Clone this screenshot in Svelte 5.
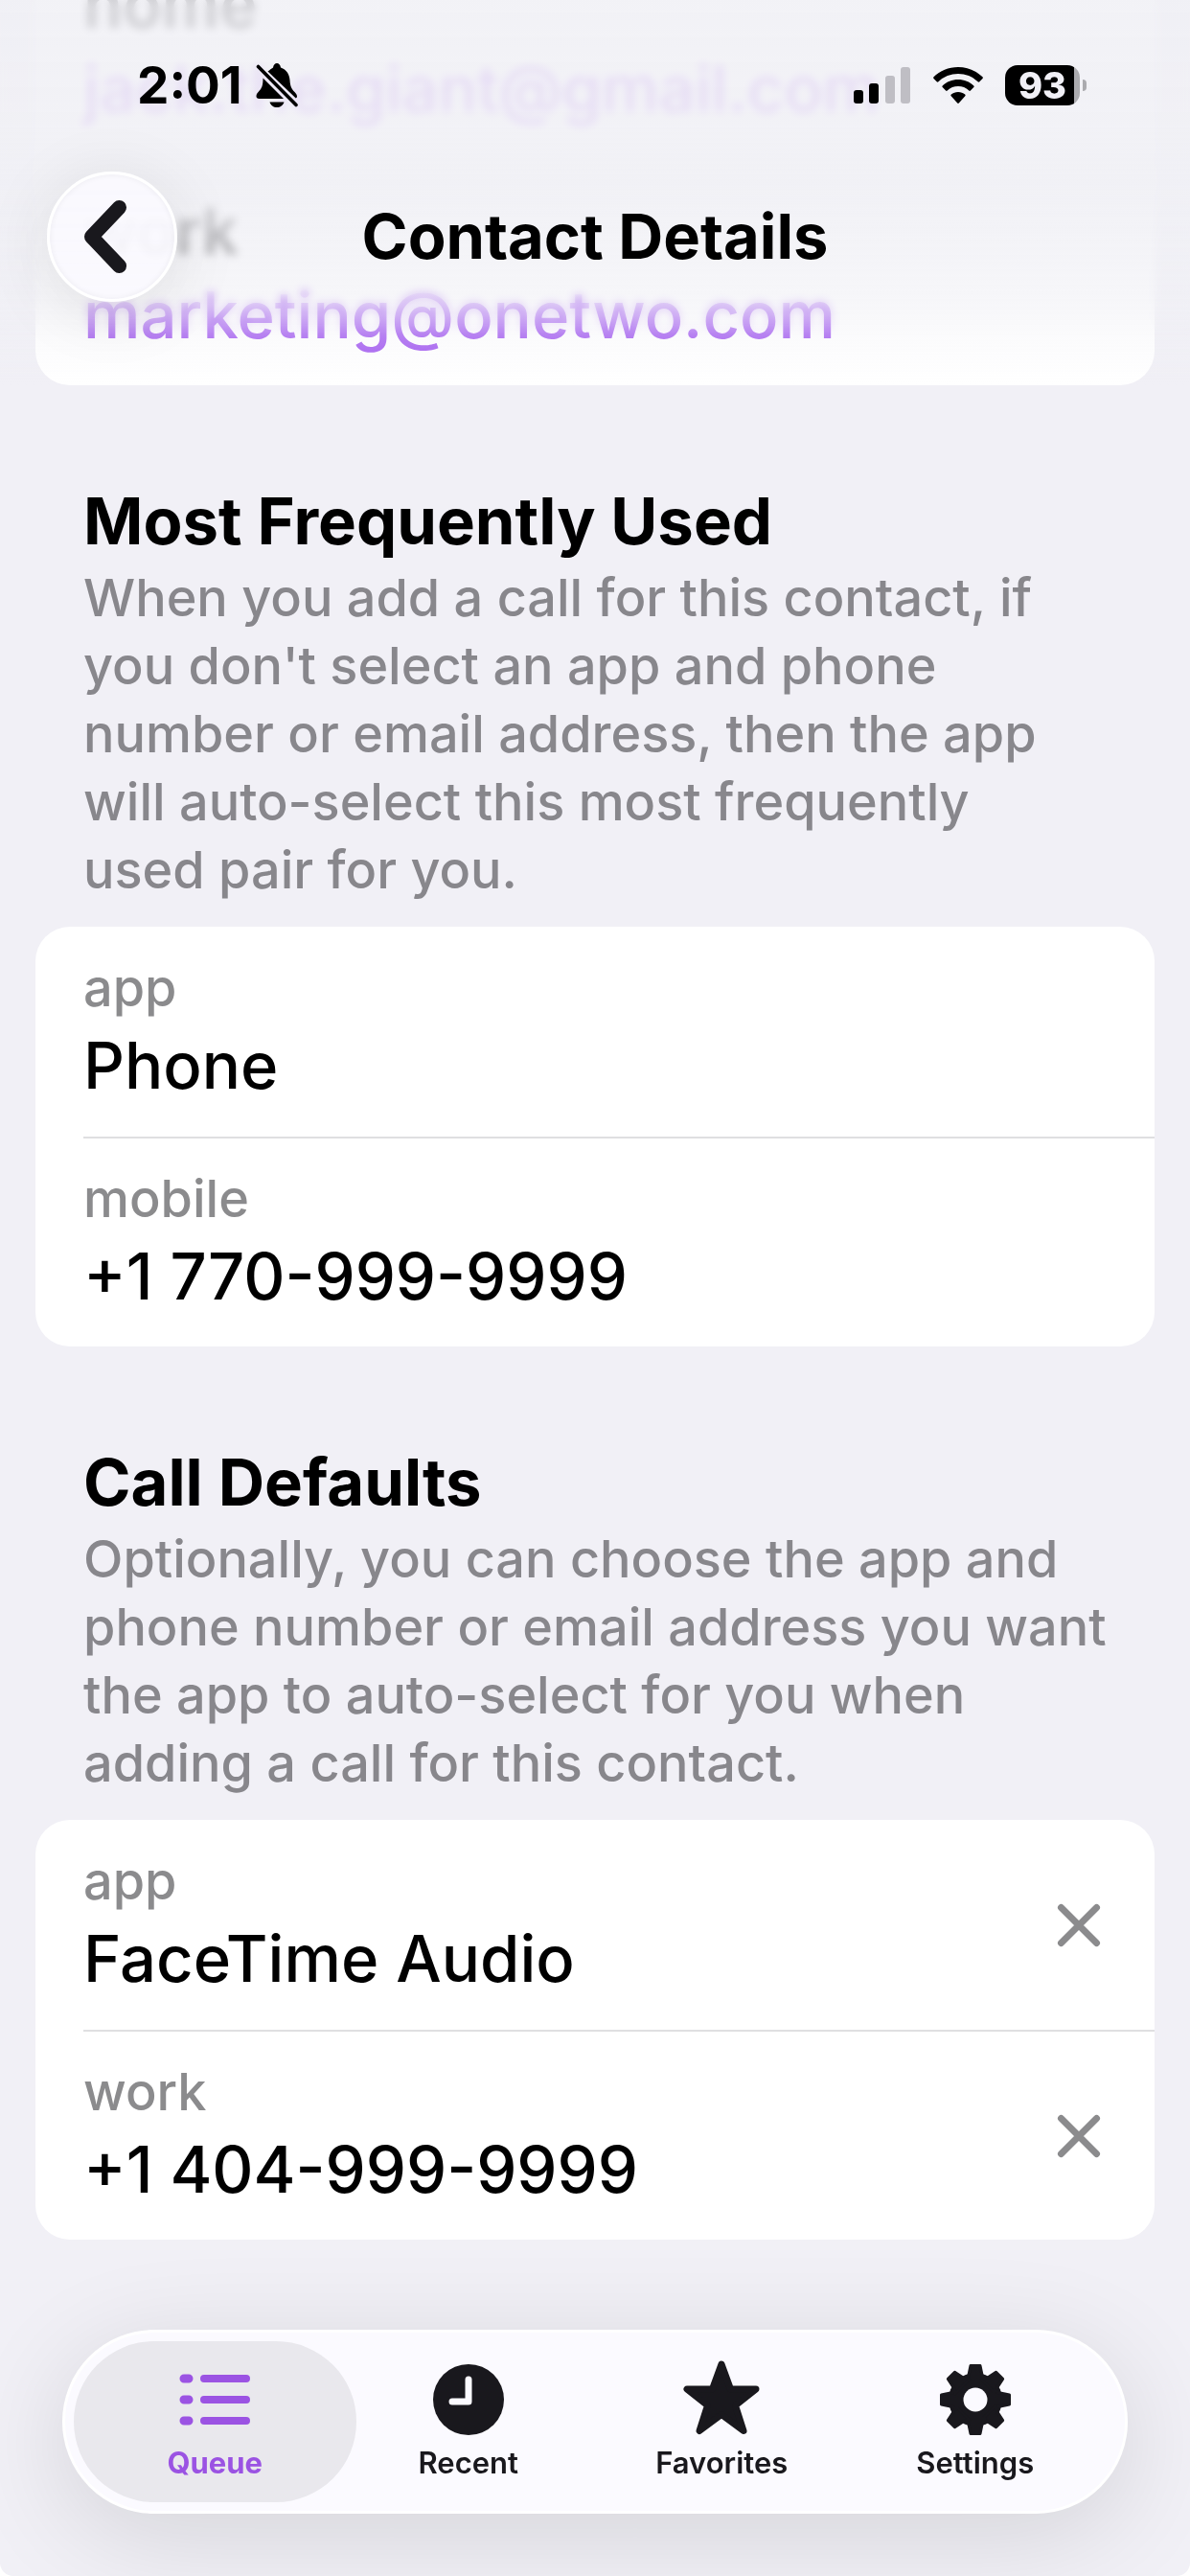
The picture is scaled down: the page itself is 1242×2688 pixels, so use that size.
<script lang="ts">
	type Field = { label: string; value: string; clearable?: boolean };

	const emails: Field[] = [
		{ label: 'home', value: 'jack.the.giant@gmail.com' },
		{ label: 'work', value: 'marketing@onetwo.com' }
	];

	const sections: { title: string; description: string; fields: Field[] }[] = [
		{
			title: 'Most Frequently Used',
			description:
				"When you add a call for this contact, if you don't select an app and phone number or email address, then the app will auto-select this most frequently used\u00a0pair for you.",
			fields: [
				{ label: 'app', value: 'Phone' },
				{ label: 'mobile', value: '+1 770-999-9999' }
			]
		},
		{
			title: 'Call Defaults',
			description:
				'Optionally, you can choose the app and phone number or email address you want the app to auto-select for you when adding a call for this contact.',
			fields: [
				{ label: 'app', value: 'FaceTime Audio', clearable: true },
				{ label: 'work', value: '+1 404-999-9999', clearable: true }
			]
		}
	];

	const tabs = ['Queue', 'Recent', 'Favorites', 'Settings'];
	let activeTab = $state('Queue');

	const teeth = [0, 45, 90, 135, 180, 225, 270, 315];
</script>

<div class="screen">
	<main>
		<div class="card emails">
			{#each emails as email}
				<div class="row">
					<div class="field">
						<span class="label">{email.label}</span>
						<a class="value" href="mailto:{email.value}">{email.value}</a>
					</div>
				</div>
			{/each}
		</div>

		{#each sections as section}
			<section>
				<div class="intro">
					<h2>{section.title}</h2>
					<p>{section.description}</p>
				</div>
				<div class="card">
					{#each section.fields as field}
						<div class="row">
							<div class="field">
								<span class="label">{field.label}</span>
								<span class="value">{field.value}</span>
							</div>
							{#if field.clearable}
								<button class="clear" type="button" aria-label="Clear {field.label}">
									<svg viewBox="0 0 46 46"><path d="M4.500 4.500 41.500 41.500M41.500 4.500 4.500 41.500" /></svg>
								</button>
							{/if}
						</div>
					{/each}
				</div>
			</section>
		{/each}
	</main>

	<header>
		<div class="status">
			<div class="clock">
				<span>2:01</span>
				<svg class="bell" viewBox="0 0 44 46">
					<path
						d="M14 7.500C16 5.500 17.500 5 18 4.500 18.500 1.500 20 0 22 0s3.500 1.500 4 4.500c6 2 9 7 9.500 13 .4 7 2 9.500 5 12.500 1.500 1.500 2.500 3 2.500 4.500 0 1-.5 1.500-1.200 2L12.500 8.500z"
					/>
					<path
						d="M7.500 15.500 29 37H3.500C1.500 37 .5 36 .5 34.500c0-2 1-3.500 2.500-5 3-3 4.500-6 4.500-14zM14.500 40.500h15c-1 3.500-4 5.500-7.500 5.500s-6.500-2-7.500-5.500z"
					/>
					<path class="slash" d="M2.500 3.500 42 43.500" />
				</svg>
			</div>
			<div class="indicators">
				<svg class="signal" viewBox="0 0 60 38">
					<rect x="0" y="24" width="10" height="14" rx="3" />
					<rect x="16" y="17" width="10" height="21" rx="3" />
					<rect class="dim" x="33" y="9" width="10" height="29" rx="3" />
					<rect class="dim" x="49" y="0" width="10" height="38" rx="3" />
				</svg>
				<svg class="wifi" viewBox="0 0 52 38">
					<path
						d="M26 0C36 0 45 4 51.500 10.200c.5.500.5 1.300 0 1.800L48.300 15.300c-.5.500-1.200.5-1.700 0A29.500 29.500 0 0 0 5.400 15.300c-.5.500-1.200.5-1.700 0L.5 12c-.5-.5-.5-1.300 0-1.800C7 4 16 0 26 0z"
					/>
					<path
						d="M26 13c6.300 0 12 2.400 16.300 6.400.5.500.5 1.200 0 1.700l-3.400 3.400c-.5.500-1.100.5-1.600 0a16.700 16.700 0 0 0-22.600 0c-.5.500-1.100.5-1.600 0l-3.400-3.400c-.5-.5-.5-1.200 0-1.700C14 15.400 19.700 13 26 13z"
					/>
					<path
						d="M26 26c2.800 0 5.300 1 7.200 2.600.6.500.6 1.200.1 1.700l-6.500 7.200c-.5.500-1.100.5-1.600 0l-6.500-7.200c-.5-.5-.5-1.200.1-1.700C20.700 27 23.200 26 26 26z"
					/>
				</svg>
				<div class="battery">
					<span>93</span>
				</div>
			</div>
		</div>
		<div class="nav">
			<button class="back" type="button" aria-label="Back">
				<svg viewBox="0 0 48 78"><path d="M38.500 8.500 9.500 39 38.500 69.500" /></svg>
			</button>
			<h1>Contact Details</h1>
		</div>
	</header>

	<nav class="tabbar">
		{#each tabs as tab}
			<button
				class="tab"
				class:active={tab === activeTab}
				type="button"
				onclick={() => (activeTab = tab)}
			>
				<svg viewBox="0 0 96 96">
					{#if tab === 'Queue'}
						<path class="bullets" d="M16 26h5M16 48h5M16 70h5" />
						<path class="lines" d="M37 26h44M37 48h44M37 70h44" />
					{:else if tab === 'Recent'}
						<circle cx="48" cy="48" r="37" />
						<path class="hands" d="M48 27v23H31" />
					{:else if tab === 'Favorites'}
						<path
							class="star"
							d="M48 11 57.500 37H84L62.500 54 71 80.500 48 63.500 25 80.500 33.500 54 12 37H38.500z"
						/>
					{:else}
						<mask id="gear-hole">
							<rect width="96" height="96" fill="#fff" />
							<circle cx="48" cy="48" r="12.500" fill="#000" />
						</mask>
						<g mask="url(#gear-hole)">
							<circle cx="48" cy="48" r="28" />
							{#each teeth as angle}
								<path
									class="tooth"
									transform="rotate({angle} 48 48)"
									d="M43 12.500h10l2.500 12 3 4h-21l3-4z"
								/>
							{/each}
						</g>
					{/if}
				</svg>
				<span>{tab}</span>
			</button>
		{/each}
	</nav>
</div>

<style>
	:global(body) {
		margin: 0;
		background: #fff;
	}
	.screen {
		--bg: #f1f0f6;
		--accent: #9b53e3;
		--ink: #19181d;
		--muted: #88878c;
		position: relative;
		min-height: 100vh;
		box-sizing: border-box;
		overflow: hidden;
		border-radius: 0 0 14px 14px;
		background: var(--bg);
		color: #000;
		font-family: Inter, 'Liberation Sans', sans-serif;
	}
	button {
		border: 0;
		padding: 0;
		background: none;
		color: inherit;
		font: inherit;
		cursor: pointer;
	}
	svg {
		display: block;
		fill: currentColor;
	}
	h1,
	h2,
	p {
		margin: 0;
	}

	main {
		margin-top: -52px;
		padding: 0 37px 350px;
	}
	.card {
		border-radius: 36px;
		background: #fff;
	}
	.row {
		display: flex;
		align-items: center;
		justify-content: space-between;
		box-sizing: border-box;
		height: 219px;
		margin-left: 50px;
		padding-right: 56px;
	}
	.row + .row {
		border-top: 2px solid #dfdfe1;
	}
	.field {
		display: flex;
		flex-direction: column;
	}
	.label {
		color: #8b8b8d;
		font-size: 54px;
		font-weight: 500;
		line-height: 71px;
	}
	.value {
		font-size: 67px;
		font-weight: 500;
		line-height: 92px;
	}
	.emails .row + .row {
		height: 235px;
		padding-top: 16px;
	}
	.emails .label {
		margin-bottom: 13px;
		color: #000;
		font-size: 67px;
		font-weight: 600;
		line-height: 58px;
	}
	.emails .value {
		color: #a055f0;
		text-decoration: none;
	}
	.clear svg {
		width: 46px;
		height: 46px;
		fill: none;
		stroke: #8b8b8d;
		stroke-width: 7;
		stroke-linecap: round;
	}

	.intro {
		padding: 98px 44px 24px 50px;
	}
	h2 {
		font-size: 67px;
		font-weight: 700;
		line-height: 88px;
	}
	p {
		color: var(--muted);
		font-size: 54px;
		font-weight: 500;
		line-height: 71px;
	}

	header {
		position: absolute;
		inset: 0 0 auto;
		height: 402px;
	}
	header::before {
		content: '';
		position: absolute;
		inset: 0;
		backdrop-filter: blur(5px);
		mask-image: linear-gradient(#000 300px, transparent 350px);
	}
	header::after {
		content: '';
		position: absolute;
		inset: 0;
		background: linear-gradient(
			rgb(240 240 245 / 0.86),
			rgb(240 240 245 / 0.88) 130px,
			rgb(240 240 245 / 0.92) 190px,
			rgb(240 240 245 / 0.78) 250px,
			rgb(240 240 245 / 0.54) 320px,
			rgb(240 240 245 / 0.26) 353px,
			rgb(240 240 245 / 0)
		);
	}
	.status,
	.nav {
		position: relative;
		z-index: 1;
		display: flex;
		align-items: center;
	}
	.status {
		justify-content: space-between;
		height: 178px;
		padding: 0 115px 0 143px;
	}
	.clock,
	.indicators {
		display: flex;
		align-items: center;
	}
	.clock {
		gap: 14px;
		font-size: 53px;
		font-weight: 700;
	}
	.bell {
		width: 44px;
		height: 46px;
	}
	.slash {
		fill: none;
		stroke: currentColor;
		stroke-width: 3.600;
		stroke-linecap: round;
	}
	.indicators {
		gap: 23px;
	}
	.signal {
		width: 60px;
		height: 38px;
	}
	.dim {
		fill: #bfbec4;
	}
	.wifi {
		width: 52px;
		height: 38px;
	}
	.battery {
		position: relative;
		width: 78px;
		height: 42px;
		border-radius: 13px;
		background: linear-gradient(90deg, #000 72px, #ababaf 72px);
		color: #f1f0f6;
		font-size: 38px;
		font-weight: 800;
		line-height: 42px;
		text-align: center;
	}
	.battery::after {
		content: '';
		position: absolute;
		top: 15px;
		right: -7px;
		width: 4px;
		height: 12px;
		border-radius: 0 4px 4px 0;
		background: #ababaf;
	}
	.nav {
		justify-content: center;
		height: 138px;
	}
	.back {
		position: absolute;
		left: 49px;
		display: grid;
		place-items: center;
		box-sizing: border-box;
		width: 136px;
		height: 136px;
		border: 3px solid #fff;
		border-radius: 50%;
		background: rgb(251 250 255 / 0.9);
		box-shadow:
			0 10px 70px rgb(0 0 0 / 0.1),
			inset 0 0 6px rgb(0 0 0 / 0.06);
		color: var(--ink);
	}
	.back svg {
		width: 48px;
		height: 78px;
		margin-right: 14px;
		fill: none;
		stroke: currentColor;
		stroke-width: 15;
		stroke-linecap: round;
		stroke-linejoin: round;
	}
	h1 {
		font-size: 65px;
		font-weight: 700;
		line-height: 80px;
	}

	.tabbar {
		position: fixed;
		right: 65px;
		bottom: 65px;
		left: 65px;
		display: flex;
		box-sizing: border-box;
		height: 192px;
		padding: 9px 24px;
		border: 3px solid #fff;
		border-radius: 96px;
		background: #fbfaff;
		box-shadow: 0 22px 110px rgb(0 0 0 / 0.12);
	}
	/* neighbouring tabs share 30px so the highlight reaches past its column */
	.tab {
		display: flex;
		flex: 1;
		flex-direction: column;
		align-items: center;
		min-width: 0;
		margin: 0 -15px;
		border-radius: 84px;
		color: var(--ink);
		font-size: 31px;
		font-weight: 600;
		line-height: 36px;
	}
	.tab.active {
		background: #e9e8ed;
		color: var(--accent);
		font-weight: 700;
	}
	.tab svg {
		width: 96px;
		height: 96px;
		margin-top: 13px;
	}
	.bullets,
	.lines,
	.hands {
		fill: none;
		stroke: currentColor;
		stroke-width: 8;
		stroke-linecap: round;
		stroke-linejoin: round;
	}
	.bullets {
		stroke-width: 9;
	}
	.hands {
		stroke: #fbfaff;
		stroke-width: 7;
	}
	.star {
		stroke: currentColor;
		stroke-width: 7;
		stroke-linejoin: round;
	}
	.tooth {
		stroke: currentColor;
		stroke-width: 3;
		stroke-linejoin: round;
	}
</style>
